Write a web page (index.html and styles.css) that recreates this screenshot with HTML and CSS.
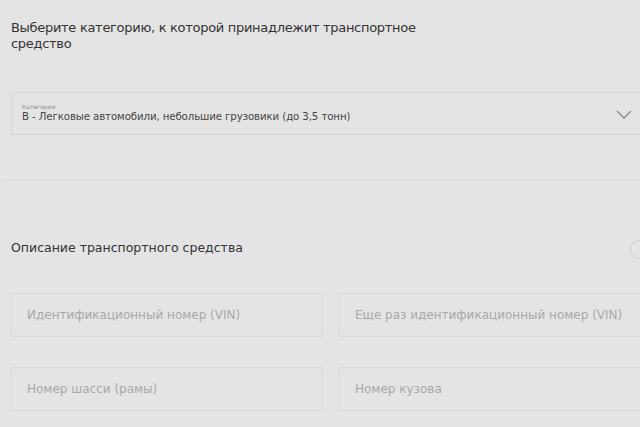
FILE: index.html
```html
<!DOCTYPE html>
<html lang="ru">
<head>
<meta charset="utf-8">
<title>Транспортное средство</title>
<link rel="stylesheet" href="styles.css">
</head>
<body>
<div class="page">
  <section class="block">
    <h2 class="lead">Выберите категорию, к которой принадлежит транспортное средство</h2>
    <div class="select">
      <div class="select-text">
        <span class="select-label">Категория</span>
        <span class="select-value">B - Легковые автомобили, небольшие грузовики (до 3,5 тонн)</span>
      </div>
      <svg class="chevron" width="16" height="9" viewBox="0 0 16 9"><path d="M1 1l7 7 7-7" fill="none" stroke="#8f8f8f" stroke-width="1.5"/></svg>
    </div>
  </section>
  <hr class="divider">
  <section class="block">
    <div class="section-head">
      <h3 class="title">Описание транспортного средства</h3>
      <span class="help" role="img" aria-label="Справка"></span>
    </div>
    <div class="grid">
      <div class="field">Идентификационный номер (VIN)</div>
      <div class="field">Еще раз идентификационный номер (VIN)</div>
      <div class="field">Номер шасси (рамы)</div>
      <div class="field">Номер кузова</div>
    </div>
  </section>
</div>
</body>
</html>
```
FILE: styles.css
```css
html, body {
  margin: 0;
  background: #e4e4e4;
  overflow: hidden;
}
body {
  font-family: "DejaVu Sans", Verdana, sans-serif;
  color: #333;
}
.page {
  width: 680px;
  padding-top: 20px;
}
.block {
  padding-left: 11px;
  width: 660px;
}
.lead {
  margin: 0;
  font-size: 13px;
  font-weight: normal;
  line-height: 16px;
  width: 420px;
  color: #333;
  letter-spacing: -0.3px;
}
.select {
  margin-top: 40px;
  height: 43px;
  border: 1px solid #d6d6d6;
  border-radius: 3px;
  display: flex;
  align-items: center;
  justify-content: space-between;
  padding: 0 18px 0 10px;
  box-sizing: border-box;
  width: 640px;
}
.select-text {
  display: flex;
  flex-direction: column;
  gap: 1px;
  margin-top: -2px;
}
.select-label {
  font-size: 6px;
  color: #888;
}
.select-value {
  font-size: 10.2px;
  color: #444;
  letter-spacing: -0.1px;
}
.chevron {
  margin-top: 1px;
}
.divider {
  margin: 45px 0 0;
  border: 0;
  border-top: 1px dotted #d2d2d2;
  width: 640px;
}
.section-head {
  margin-top: 56px;
  display: flex;
  align-items: center;
  justify-content: space-between;
  width: 638px;
  height: 20px;
}
.title {
  margin: 0;
  font-size: 12.5px;
  font-weight: normal;
  color: #333;
  letter-spacing: 0;
}
/* round help badge; only its left half fits in the viewport */
.help {
  width: 17px;
  height: 17px;
  border: 1px solid #cdcdcd;
  border-radius: 50%;
  margin-top: 4px;
}
.grid {
  margin-top: 36px;
  display: grid;
  grid-template-columns: 312px 312px;
  column-gap: 16px;
  row-gap: 30px;
}
.field {
  height: 44px;
  border: 1px solid #d8d8d8;
  border-radius: 3px;
  box-sizing: border-box;
  display: flex;
  align-items: center;
  padding-left: 15px;
  padding-bottom: 1px;
  font-size: 12px;
  color: #a8a8a8;
  letter-spacing: 0;
}
```
